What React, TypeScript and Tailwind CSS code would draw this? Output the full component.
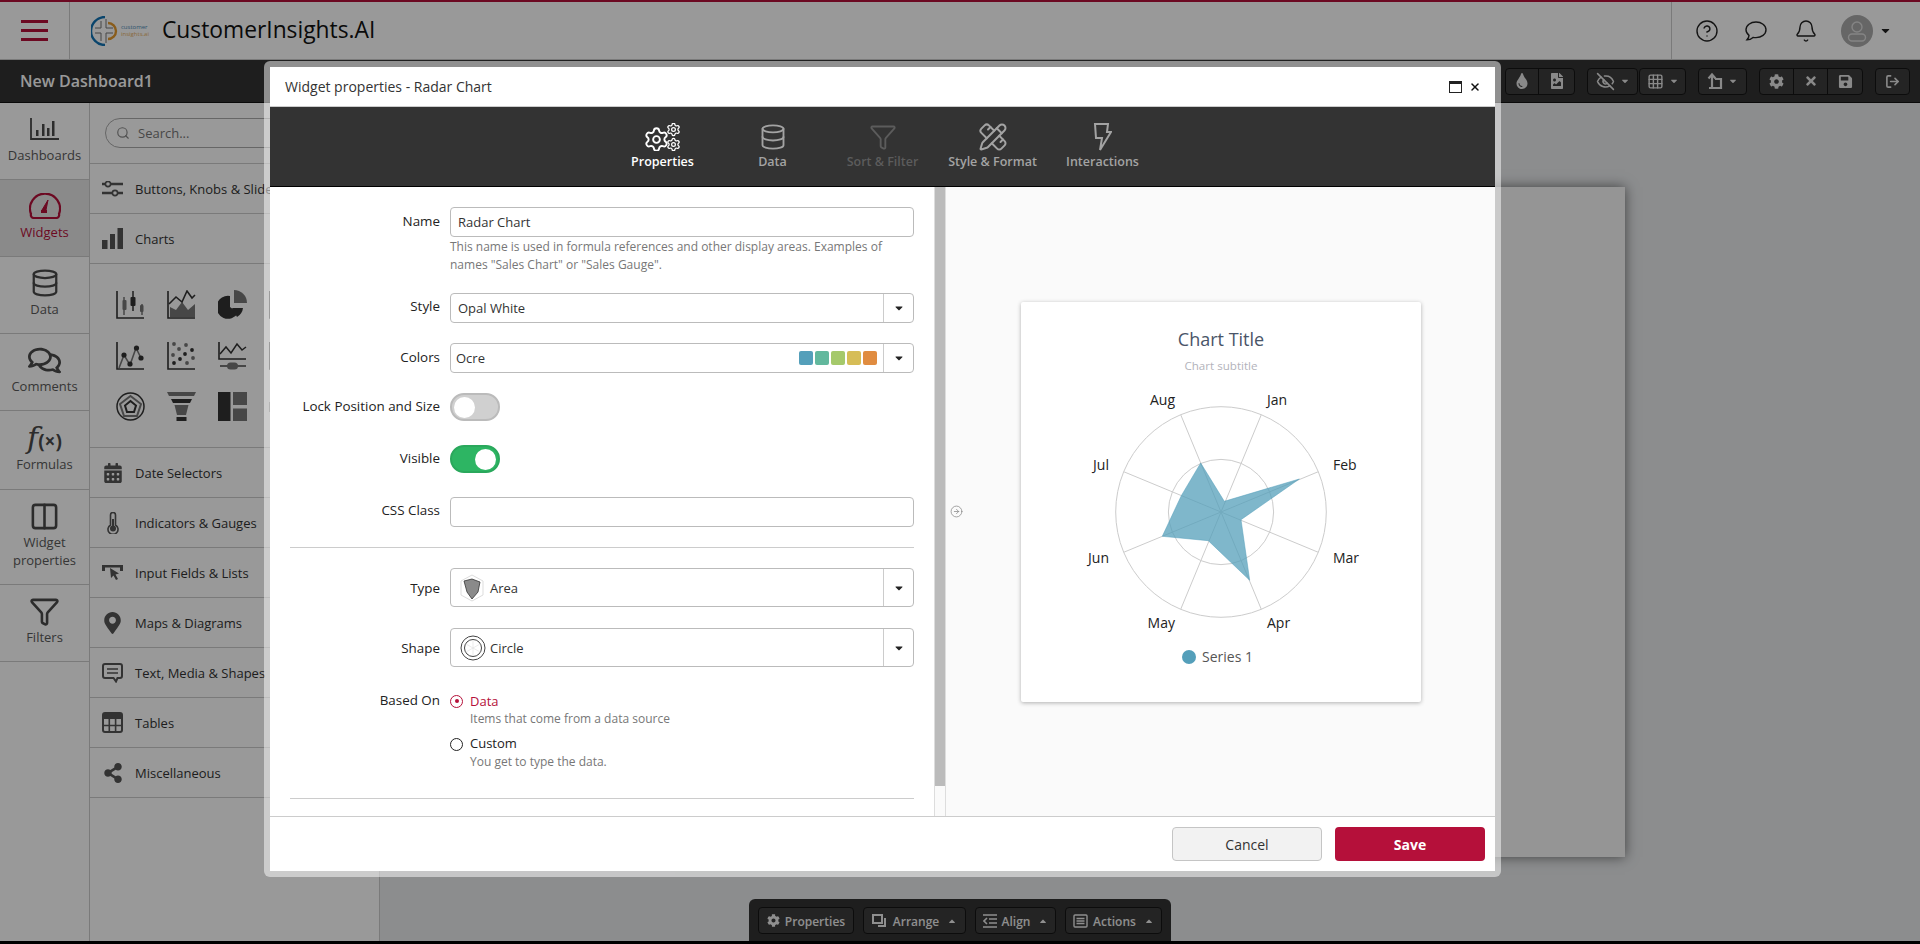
import type { ReactNode } from 'react';
import {
  CircleArrowRight,
  Columns2,
  Database,
  EyeOff,
  Funnel,
  Grid3x3,
  LogOut,
  PencilRuler,
  Search,
  Settings,
  Bell,
  CircleHelp,
  X,
} from 'lucide-react';
import {
  FaCalendarAlt,
  FaCaretDown,
  FaCaretUp,
  FaCog,
  FaFileImage,
  FaMapMarkerAlt,
  FaRegComments,
  FaSave,
  FaShareAlt,
  FaTimes,
  FaTint,
} from 'react-icons/fa';

const Axis = () => <path d="M1 1V28H28" fill="none" stroke="#333" strokeWidth="1.6" />;

// 4th column sits behind the dialog, only its left edge shows through the dialog border
const chartIcons: ReactNode[] = [
  <>
    <Axis />
    <path d="M8 7V25M26 14V25" stroke="#777" strokeWidth="1.5" />
    <rect x="6.5" y="10" width="4" height="10" fill="#777" rx="1" />
    <rect x="24" y="15" width="3.5" height="7" fill="#777" rx="1" />
    <path d="M17 1V21" stroke="#333" strokeWidth="1.5" />
    <rect x="14.5" y="7" width="5" height="9" fill="#333" rx="1" />
  </>,
  <>
    <Axis />
    <path d="M3 27V17L9 20L15 12L21 20L28 14V27Z" fill="#777" />
    <path d="M2 14L9 7L15 12L20 1L25 8L28 5" fill="none" stroke="#333" strokeWidth="1.6" />
  </>,
  <>
    <path d="M12 6V17L20 23A11.5 11.5 0 1 1 12 6Z" fill="#333" />
    <path d="M16 0A13 13 0 0 1 29 13H16Z" fill="#777" />
    <path d="M14 18H25A12 12 0 0 1 19 27Z" fill="#333" />
  </>,
  <Axis />,
  <>
    <Axis />
    <path d="M3 27L8 14L14 24L20 7L25 17" fill="none" stroke="#777" strokeWidth="1.6" />
    <circle cx="8" cy="14" r="2.6" fill="#333" />
    <circle cx="14" cy="23" r="2.6" fill="#333" />
    <circle cx="20.5" cy="7" r="2.6" fill="#333" />
    <circle cx="25" cy="17" r="2.6" fill="#333" />
  </>,
  <>
    <Axis />
    {[[7, 3], [12, 8], [19, 4], [6, 14], [26, 17], [20, 22]].map(([x, y]) => (
      <circle key={`${x}-${y}`} cx={x} cy={y} r="1.9" fill="#777" />
    ))}
    {[[25, 9], [18, 13], [13, 18], [7, 22]].map(([x, y]) => (
      <circle key={`${x}-${y}`} cx={x} cy={y} r="1.9" fill="#333" />
    ))}
  </>,
  <>
    <path d="M1 1V18H28" fill="none" stroke="#333" strokeWidth="1.6" />
    <path d="M2 13L8 6L13 12L19 3L24 9L28 6" fill="none" stroke="#333" strokeWidth="1.5" />
    <path d="M2 25H28" stroke="#777" strokeWidth="2" />
    <rect x="9" y="21.5" width="11" height="7" rx="3.5" fill="#777" />
  </>,
  <Axis />,
  <>
    <circle cx="14.5" cy="14.5" r="13.5" fill="none" stroke="#333" strokeWidth="1.5" />
    <path d="M14.5 4L25 12L21 24H8L4 12Z" fill="none" stroke="#777" strokeWidth="2" />
    <path d="M14.5 9L20 13.5L18 20H11L9 13.5Z" fill="none" stroke="#333" strokeWidth="2" />
  </>,
  <>
    <path d="M0 0H29L27 4H2Z" fill="#777" />
    <path d="M4 7H25L23 11H6Z" fill="#333" />
    <path d="M7.5 13H21.5L19 23H10Z" fill="#777" />
    <rect x="9.5" y="25" width="10" height="4" fill="#333" />
  </>,
  <>
    <rect x="0" y="0" width="12.5" height="29" fill="#333" />
    <rect x="15" y="0" width="14" height="13" fill="#777" />
    <rect x="15" y="16.5" width="14" height="12.5" fill="#777" />
  </>,
  <path d="M1 10V20" stroke="#999" strokeWidth="1.6" />,
];

const panelTop: [string, ReactNode][] = [
  [
    'Buttons, Knobs & Sliders',
    <svg width="21" height="16" viewBox="0 0 21 16" fill="none" stroke="#555">
      <path d="M0 3H21M0 12H21" strokeWidth="2.4" />
      <circle cx="6" cy="3" r="2.6" fill="#fff" strokeWidth="1.6" />
      <circle cx="13" cy="12" r="2.6" fill="#fff" strokeWidth="1.6" />
    </svg>,
  ],
  [
    'Charts',
    <svg width="21" height="21" viewBox="0 0 21 21" fill="#555">
      <rect x="0" y="12" width="5.5" height="9" />
      <rect x="8" y="6" width="5" height="15" />
      <rect x="15.5" y="0" width="5.5" height="21" />
    </svg>,
  ],
];

const panelBottom: [string, ReactNode][] = [
  ['Date Selectors', <FaCalendarAlt size={20} color="#555" />],
  [
    'Indicators & Gauges',
    <svg width="12" height="22" viewBox="0 0 12 22" fill="none" stroke="#555" strokeWidth="1.6">
      <path d="M3.5 13V3A2.5 2.5 0 0 1 8.5 3V13A5 5 0 1 1 3.5 13Z" />
      <circle cx="6" cy="16.5" r="3" fill="#555" stroke="none" />
      <path d="M6 7V16" strokeWidth="2" />
    </svg>,
  ],
  [
    'Input Fields & Lists',
    <svg width="21" height="17" viewBox="0 0 21 17" fill="#555">
      <path d="M0 1H21V7H18V3.5H3V7H0Z" />
      <path d="M8 4L17 9.5L13.5 10.5L16 15L14 16L11.5 11.5L9 14Z" />
    </svg>,
  ],
  ['Maps & Diagrams', <FaMapMarkerAlt size={22} color="#555" />],
  [
    'Text, Media & Shapes',
    <svg width="21" height="20" viewBox="0 0 21 20" fill="none" stroke="#555" strokeWidth="2">
      <path d="M3 1H18A2 2 0 0 1 20 3V13A2 2 0 0 1 18 15H15.5L14 18.5L11.5 15H3A2 2 0 0 1 1 13V3A2 2 0 0 1 3 1Z" />
      <path d="M5 6H16M5 10H16" strokeWidth="1.6" />
    </svg>,
  ],
  [
    'Tables',
    <svg width="21" height="21" viewBox="0 0 21 21" fill="none" stroke="#555">
      <rect x="1" y="1" width="19" height="19" rx="2" strokeWidth="2" />
      <rect x="1" y="1" width="19" height="6" fill="#555" strokeWidth="0" />
      <path d="M1 13.5H20M7.3 7V20M13.6 7V20" strokeWidth="1.6" />
    </svg>,
  ],
  ['Miscellaneous', <FaShareAlt size={20} color="#555" />],
];

function SideItem({ label, icon, h, active }: { label: ReactNode; icon: ReactNode; h: string; active?: boolean }) {
  return (
    <div
      className={`flex flex-col items-center justify-center border-b border-[#ccc] pb-[5px] text-[13px] leading-[18px] text-center ${h} ${
        active ? 'bg-[#e6e6e6] text-[#b5103a]' : 'text-[#5a5a5a]'
      }`}
    >
      <div className="h-[32px] flex items-center justify-center mb-[1px]">{icon}</div>
      <div>{label}</div>
    </div>
  );
}

function PanelRow({ label, icon }: { label: string; icon: ReactNode }) {
  return (
    <div className="h-[50px] flex items-center border-b border-[#ccc] whitespace-nowrap text-[13px] text-[#333]">
      <div className="w-[45px] pl-[12px] flex justify-start items-center">
        <div className="w-[21px] flex justify-center">{icon}</div>
      </div>
      <span className="pt-[2px]">{label}</span>
    </div>
  );
}

function ToolGroup({ children }: { children: ReactNode }) {
  return (
    <div className="h-[27px] flex rounded-[4px] border border-[#151515] bg-[#3c3c3c] divide-x divide-[#151515] text-[#e4e4e4]">
      {children}
    </div>
  );
}

function ToolCell({ w, children }: { w: string; children: ReactNode }) {
  return <div className={`${w} flex items-center justify-center gap-[5px]`}>{children}</div>;
}

function BottomButton({ w, icon, label, caret = true }: { w: string; icon: ReactNode; label: string; caret?: boolean }) {
  return (
    <div
      className={`${w} h-[27px] flex items-center justify-center gap-[5px] rounded-[4px] border border-[#151515] bg-[#3c3c3c] text-[12px] font-semibold text-[#eee]`}
    >
      {icon}
      <span className="pt-[2px]">{label}</span>
      {caret && <FaCaretUp size={10} className="ml-[3px]" />}
    </div>
  );
}

function FormRow({ label, labelClass, children, className }: { label: string; labelClass: string; children: ReactNode; className: string }) {
  return (
    <div className={`flex ${className}`}>
      <div className={`w-[170px] text-right text-[13.4px] leading-[18px] text-[#222] whitespace-nowrap ${labelClass}`}>{label}</div>
      <div className="ml-[10px] w-[464px]">{children}</div>
    </div>
  );
}

function SelectBox({ h, children }: { h: string; children: ReactNode }) {
  return (
    <div className={`${h} flex border border-[#bbb] rounded-[4px] bg-white text-[13px] text-[#333]`}>
      <div className="flex-1 flex items-center min-w-0">{children}</div>
      <div className="w-[30px] border-l border-[#ccc] flex items-center justify-center">
        <FaCaretDown size={12} color="#222" />
      </div>
    </div>
  );
}

function Toggle({ on }: { on?: boolean }) {
  return (
    <div
      className={`w-[50px] h-[28px] rounded-full border-2 flex items-center px-[2px] ${
        on ? 'bg-[#2db563] border-[#2aa85c] justify-end' : 'bg-[#d0d0d0] border-[#bbb] justify-start'
      }`}
    >
      <div className="w-[21px] h-[21px] rounded-full bg-white" />
    </div>
  );
}

function RadarChart() {
  const labels: [string, number, number, 'start' | 'end'][] = [
    ['Aug', 154, 103, 'end'],
    ['Jan', 246, 103, 'start'],
    ['Jul', 88, 168, 'end'],
    ['Feb', 312, 168, 'start'],
    ['Jun', 88, 261, 'end'],
    ['Mar', 312, 261, 'start'],
    ['May', 154, 326, 'end'],
    ['Apr', 246, 326, 'start'],
  ];
  const spokes = [
    [40.3, 97.3],
    [97.3, 40.3],
    [97.3, -40.3],
    [40.3, -97.3],
  ];
  return (
    <svg width="400" height="400" viewBox="0 0 400 400">
      <text x="200" y="44" textAnchor="middle" fontSize="18" fill="#4a5568">Chart Title</text>
      <text x="200" y="68" textAnchor="middle" fontSize="11.6" fill="#b3b3bb">Chart subtitle</text>
      <circle cx="200" cy="210" r="105.3" fill="none" stroke="#ccc" />
      <circle cx="200" cy="210" r="52.6" fill="none" stroke="#ccc" />
      {spokes.map(([dx, dy]) => (
        <line key={dx + dy} x1={200 - dx} y1={210 - dy} x2={200 + dx} y2={210 + dy} stroke="#ccc" />
      ))}
      <polygon
        points="203.3,199.3 278.3,177 220,217.7 228.7,278.3 187.3,238.7 141.3,234.3 160.3,193.7 179.7,161"
        fill="#549fba"
        fillOpacity="0.75"
        stroke="#549fba"
        strokeWidth="0.5"
      />
      {labels.map(([t, x, y, anchor]) => (
        <text key={t} x={x} y={y} textAnchor={anchor} fontSize="14" fill="#222">{t}</text>
      ))}
      <circle cx="168" cy="355" r="7" fill="#549fba" />
      <text x="181" y="360" fontSize="14" fill="#555">Series 1</text>
    </svg>
  );
}

function Tab({ label, icon, className }: { label: string; icon: ReactNode; className: string }) {
  return (
    <div className={`w-[110px] flex flex-col items-center ${className}`}>
      <div className="h-[28px] flex items-center justify-center">{icon}</div>
      <div className="mt-[2px] text-[12.5px] leading-[18px] font-semibold whitespace-nowrap">{label}</div>
    </div>
  );
}

export default function App() {
  return (
    <div className="relative w-[1920px] h-[944px] overflow-hidden bg-black font-['Open_Sans',sans-serif]">
      <div className="h-[941px] flex flex-col">
        {/* top header */}
        <header className="h-[60px] shrink-0 flex bg-white border-t-2 border-b border-t-[#b5103a] border-b-[#ccc]">
          <div className="w-[70px] border-r border-[#ccc] flex flex-col items-center justify-center gap-[6px] pr-[1px]">
            <div className="w-[27px] h-[3px] bg-[#b5103a]" />
            <div className="w-[27px] h-[3px] bg-[#b5103a]" />
            <div className="w-[27px] h-[3px] bg-[#b5103a]" />
          </div>
          <div className="ml-[21px] w-[60px] h-[30px] self-center flex items-center">
            <svg width="28" height="30" viewBox="0 0 28 30" fill="none">
              <path d="M14 1A14 14 0 0 0 14 29" stroke="#1273b5" strokeWidth="2.4" />
              <path d="M17 7A8 8 0 0 1 17 23" stroke="#e59a2e" strokeWidth="2.4" />
              <path d="M10 5V12H4M4 17H10V25M15 3V12H22M22 17H15V27" stroke="#777" strokeWidth="1" />
            </svg>
            <div className="ml-[2px] text-[6px] leading-[7px]">
              <div className="text-[#4a8cb8]">customer</div>
              <div className="text-[#e8b060]">insights.ai</div>
            </div>
          </div>
          <div className="ml-[11px] self-center text-[22.8px] text-[#111]">CustomerInsights.AI</div>
          <div className="ml-auto w-[249px] border-l border-[#ccc] flex items-center pl-[23px] text-[#222]">
            <CircleHelp size={24} strokeWidth={1.4} />
            <svg width="24" height="22" viewBox="0 0 24 22" fill="none" stroke="currentColor" strokeWidth="1.4" className="ml-[25px]">
              <path d="M12 2C6.5 2 2 5.3 2 9.8C2 12.2 3.2 14 5 15.4C5 17 4 18.6 3 19.8C5.5 19.8 7.5 18.8 9 17.4C10 17.6 11 17.6 12 17.6C17.5 17.6 22 14.3 22 9.8C22 5.3 17.5 2 12 2Z" />
            </svg>
            <Bell size={24} strokeWidth={1.4} className="ml-[26px]" />
            <div className="ml-[23px] w-[32px] h-[32px] rounded-full bg-[#aaa] flex items-center justify-center">
              <svg width="20" height="22" viewBox="0 0 20 22" fill="none" stroke="#ddd" strokeWidth="1.4">
                <circle cx="10" cy="7" r="5" />
                <rect x="1.5" y="14" width="17" height="7" rx="3.5" />
              </svg>
            </div>
            <FaCaretDown size={13} className="ml-[6px]" />
          </div>
        </header>

        {/* dashboard toolbar */}
        <div className="h-[43px] shrink-0 flex items-center bg-[#333] border-b border-[#111] pr-[10px]">
          <div className="ml-[20px] text-[16px] font-semibold text-white">New Dashboard1</div>
          <div className="ml-auto flex items-center gap-[12px]">
            <ToolGroup>
              <ToolCell w="w-[33px]"><FaTint size={16} /></ToolCell>
              <ToolCell w="w-[35px]"><FaFileImage size={16} /></ToolCell>
            </ToolGroup>
            <div className="flex gap-[1px]">
              <ToolGroup>
                <ToolCell w="w-[49px]"><EyeOff size={19} /><FaCaretDown size={10} /></ToolCell>
              </ToolGroup>
              <ToolGroup>
                <ToolCell w="w-[45px]"><Grid3x3 size={17} /><FaCaretDown size={10} /></ToolCell>
              </ToolGroup>
            </div>
            <ToolGroup>
              <ToolCell w="w-[47px]">
                <svg width="16" height="18" viewBox="0 0 16 18" fill="none" stroke="currentColor" strokeWidth="2.2">
                  <path d="M5 16V4M1.5 6.5L5 2.5L8.5 6.5" />
                  <path d="M8 7H14V16H2" />
                </svg>
                <FaCaretDown size={10} />
              </ToolCell>
            </ToolGroup>
            <ToolGroup>
              <ToolCell w="w-[34px]"><FaCog size={15} /></ToolCell>
              <ToolCell w="w-[34px]"><FaTimes size={14} /></ToolCell>
              <ToolCell w="w-[34px]"><FaSave size={15} /></ToolCell>
            </ToolGroup>
            <ToolGroup>
              <ToolCell w="w-[33px]"><LogOut size={15} strokeWidth={2.6} /></ToolCell>
            </ToolGroup>
          </div>
        </div>

        <div className="flex-1 flex min-h-0">
          {/* left nav */}
          <nav className="w-[90px] shrink-0 bg-white border-r border-[#ccc]">
            <SideItem
              h="h-[77px]"
              label="Dashboards"
              icon={
                <svg width="29" height="22" viewBox="0 0 29 22" fill="#4a4a4a">
                  <path d="M1 0V21H29" fill="none" stroke="#4a4a4a" strokeWidth="1.8" />
                  <rect x="6" y="12" width="2.5" height="6" />
                  <rect x="12" y="6" width="2.5" height="12" />
                  <rect x="17" y="10" width="2.5" height="8" />
                  <rect x="22" y="3" width="2.5" height="15" />
                </svg>
              }
            />
            <SideItem
              active
              h="h-[77px]"
              label="Widgets"
              icon={
                <svg width="32" height="26" viewBox="0 0 32 26" fill="none" stroke="#b5103a">
                  <path d="M5 25H27A3 3 0 0 0 30 21A15 15 0 1 0 2 21A3 3 0 0 0 5 25Z" strokeWidth="2.2" />
                  <path d="M19 7L17 17H13Z" fill="#b5103a" strokeWidth="1" />
                  <rect x="12" y="17" width="6" height="3" fill="#b5103a" stroke="none" />
                </svg>
              }
            />
            <SideItem h="h-[77px]" label="Data" icon={<Database size={30} color="#4a4a4a" strokeWidth={1.8} />} />
            <SideItem h="h-[77px]" label="Comments" icon={<FaRegComments size={33} color="#4a4a4a" />} />
            <SideItem
              h="h-[79px]"
              label="Formulas"
              icon={
                <span className="text-[30px] leading-none text-[#4a4a4a] font-['DejaVu_Serif',serif] italic">
                  f<span className="not-italic font-bold text-[19px] font-['Open_Sans',sans-serif]">(×)</span>
                </span>
              }
            />
            <SideItem
              h="h-[95px]"
              label={<>Widget<br />properties</>}
              icon={<Columns2 size={31} color="#4a4a4a" strokeWidth={2} />}
            />
            <SideItem h="h-[77px]" label="Filters" icon={<Funnel size={31} color="#4a4a4a" strokeWidth={2} />} />
          </nav>

          {/* widget panel */}
          <aside className="w-[290px] shrink-0 bg-white border-r border-[#ccc] overflow-hidden">
            <div className="h-[61px] border-b border-[#ccc] pl-[15px] pt-[15px]">
              <div className="w-[250px] h-[30px] rounded-full border border-[#aaa] flex items-center pl-[10px] text-[13px] text-[#777]">
                <Search size={14} color="#888" />
                <span className="ml-[8px] pt-[2px]">Search...</span>
              </div>
            </div>
            {panelTop.map(([label, icon]) => (
              <PanelRow key={label} label={label} icon={icon} />
            ))}
            <div className="h-[184px] border-b border-[#ccc] pl-[26px] pt-[26px] grid grid-cols-[repeat(4,29px)] auto-rows-[29px] gap-x-[22px] gap-y-[22px]">
              {chartIcons.map((icon, i) => (
                <svg key={i} width="29" height="29" viewBox="0 0 29 29">
                  {icon}
                </svg>
              ))}
            </div>
            {panelBottom.map(([label, icon]) => (
              <PanelRow key={label} label={label} icon={icon} />
            ))}
          </aside>

          {/* canvas */}
          <main className="relative flex-1 bg-[#e9ebed] pt-[84px] pl-[295px]">
            <div className="w-[950px] h-[670px] bg-[#f8f8f8] shadow-[0_0_12px_rgba(0,0,0,0.55)]" />
            <div className="absolute left-[369px] bottom-0 w-[422px] h-[42px] rounded-t-[6px] bg-[#333] flex items-start gap-[9px] pl-[9px] pt-[8px]">
              <BottomButton w="w-[96px]" caret={false} icon={<FaCog size={13} />} label="Properties" />
              <BottomButton
                w="w-[103px]"
                label="Arrange"
                icon={
                  <svg width="16" height="14" viewBox="0 0 16 14" fill="none" stroke="currentColor" strokeWidth="2">
                    <rect x="1" y="1" width="9" height="8" />
                    <path d="M13 4V12H6" />
                  </svg>
                }
              />
              <BottomButton
                w="w-[81px]"
                label="Align"
                icon={
                  <svg width="14" height="14" viewBox="0 0 14 14" fill="none" stroke="currentColor" strokeWidth="1.6">
                    <path d="M0 1H14M6 5H14M6 9H14M0 13H14M4 4L1 7L4 10" />
                  </svg>
                }
              />
              <BottomButton
                w="w-[97px]"
                label="Actions"
                icon={
                  <svg width="15" height="14" viewBox="0 0 15 14" fill="none" stroke="currentColor" strokeWidth="1.4">
                    <rect x="1" y="1" width="13" height="12" rx="1" />
                    <path d="M3.5 4.5H11.5M3.5 7H11.5M3.5 9.5H11.5" />
                  </svg>
                }
              />
            </div>
          </main>
        </div>
      </div>

      {/* modal backdrop */}
      <div className="absolute inset-0 bg-black/40" />

      {/* widget properties dialog */}
      <div className="absolute left-[264px] top-[61px] w-[1237px] h-[816px] rounded-[6px] border-[6px] border-white/50 bg-clip-padding bg-white flex flex-col">
        <div className="h-[40px] shrink-0 flex items-center border-b border-[#ccc] pl-[15px] pr-[14px] text-[14px] text-[#333]">
          Widget properties - Radar Chart
          <div className="ml-auto w-[13px] h-[12px] border border-[#222] border-t-[3px]" />
          <X size={12} color="#111" strokeWidth={3} className="ml-[7px]" />
        </div>

        <div className="h-[80px] shrink-0 bg-[#333] border-b border-black flex justify-center pt-[16px]">
          <Tab
            label="Properties"
            className="text-white"
            icon={
              <svg width="36" height="28" viewBox="0 0 36 28" fill="none" className="text-white">
                <Settings x="-2" y="3" width="27" height="27" strokeWidth={1.7} />
                <Settings x="21" y="-1" width="15" height="15" strokeWidth={2} />
                <Settings x="21" y="14" width="15" height="15" strokeWidth={2} />
              </svg>
            }
          />
          <Tab label="Data" className="text-[#a3a3a3]" icon={<Database size={28} strokeWidth={1.6} />} />
          <Tab label="Sort & Filter" className="text-[#5c5c5c]" icon={<Funnel size={28} strokeWidth={1.6} />} />
          <Tab label="Style & Format" className="text-[#a3a3a3]" icon={<PencilRuler size={30} strokeWidth={1.6} />} />
          <Tab
            label="Interactions"
            className="text-[#a3a3a3]"
            icon={
              <svg width="19" height="28" viewBox="0 0 19 28" fill="none" stroke="currentColor" strokeWidth="2">
                <path d="M2 1H15L14 9H18L7 27L9 15H3Z" />
              </svg>
            }
          />
        </div>

        <div className="flex-1 flex min-h-0">
          {/* form */}
          <div className="w-[664px] shrink-0 overflow-hidden pt-[20px]">
            <FormRow label="Name" labelClass="pt-[5px]" className="">
              <div className="h-[30px] border border-[#bbb] rounded-[4px] flex items-center pl-[7px] pt-[2px] text-[13px] text-[#333]">Radar Chart</div>
              <div className="mt-[1px] text-[12px] leading-[18px] text-[#777]">
                This name is used in formula references and other display areas. Examples of<br />
                names "Sales Chart" or "Sales Gauge".
              </div>
            </FormRow>
            <FormRow label="Style" labelClass="pt-[4px]" className="mt-[19px]">
              <SelectBox h="h-[30px]"><span className="pl-[7px] pt-[2px]">Opal White</span></SelectBox>
            </FormRow>
            <FormRow label="Colors" labelClass="pt-[5px]" className="mt-[20px]">
              <SelectBox h="h-[30px]">
                <span className="pl-[5px] pt-[2px]">Ocre</span>
                <div className="ml-auto mr-[6px] flex gap-[2px]">
                  <div className="w-[14px] h-[14px] rounded-[2px] bg-[#549fba]" />
                  <div className="w-[14px] h-[14px] rounded-[2px] bg-[#62b89d]" />
                  <div className="w-[14px] h-[14px] rounded-[2px] bg-[#a5c96b]" />
                  <div className="w-[14px] h-[14px] rounded-[2px] bg-[#d6bd57]" />
                  <div className="w-[14px] h-[14px] rounded-[2px] bg-[#e08c40]" />
                </div>
              </SelectBox>
            </FormRow>
            <FormRow label="Lock Position and Size" labelClass="pt-[4px]" className="mt-[20px]">
              <Toggle />
            </FormRow>
            <FormRow label="Visible" labelClass="pt-[4px]" className="mt-[24px]">
              <Toggle on />
            </FormRow>
            <FormRow label="CSS Class" labelClass="pt-[4px]" className="mt-[24px]">
              <div className="h-[30px] border border-[#bbb] rounded-[4px]" />
            </FormRow>
            <div className="mt-[20px] ml-[20px] w-[624px] border-t border-[#ccc]" />
            <FormRow label="Type" labelClass="pt-[11px]" className="mt-[20px]">
              <SelectBox h="h-[39px]">
                <svg width="24" height="28" viewBox="0 0 24 28" className="ml-[9px]" fill="none">
                  <path d="M12 1L23 7V21L12 27L1 21V7Z" stroke="#ddd" />
                  <path d="M4 7L12 5L20 8L18 18L12 25L7 18Z" fill="#8a8a8a" stroke="#333" strokeWidth="0.8" />
                </svg>
                <span className="ml-[6px] pt-[2px]">Area</span>
              </SelectBox>
            </FormRow>
            <FormRow label="Shape" labelClass="pt-[11px]" className="mt-[21px]">
              <SelectBox h="h-[39px]">
                <svg width="26" height="26" viewBox="0 0 26 26" className="ml-[9px]" fill="none" stroke="#444">
                  <circle cx="13" cy="13" r="12" />
                  <circle cx="13" cy="13" r="8.5" />
                  <path d="M13 5V21M6 9L20 17M20 9L6 17" stroke="#ddd" strokeWidth="0.6" />
                </svg>
                <span className="ml-[4px] pt-[2px]">Circle</span>
              </SelectBox>
            </FormRow>
            <FormRow label="Based On" labelClass="-mt-[1px]" className="mt-[25px]">
              <div className="flex items-center h-[18px] text-[13px] font-medium text-[#b5103a]">
                <div className="w-[13px] h-[13px] rounded-full border border-[#b5103a] flex items-center justify-center">
                  <div className="w-[4px] h-[4px] rounded-full bg-[#b5103a]" />
                </div>
                <span className="ml-[7px] pt-[2px]">Data</span>
              </div>
              <div className="ml-[20px] text-[12px] leading-[18px] text-[#777]">Items that come from a data source</div>
              <div className="mt-[7px] flex items-center h-[18px] text-[13px] font-medium text-[#222]">
                <div className="w-[13px] h-[13px] rounded-full border border-[#222]" />
                <span className="ml-[7px]">Custom</span>
              </div>
              <div className="ml-[20px] text-[12px] leading-[18px] text-[#777]">You get to type the data.</div>
            </FormRow>
            <div className="mt-[27px] ml-[20px] w-[624px] border-t border-[#ccc]" />
          </div>

          {/* scrollbar */}
          <div className="w-[12px] shrink-0 border-x border-[#ddd] bg-[#fafafa]">
            <div className="h-[599px] bg-[#bbb]" />
          </div>

          {/* preview */}
          <div className="relative flex-1 bg-[#fafafa] flex items-center justify-center pl-[1px] pt-[1px]">
            <CircleArrowRight size={13} color="#888" strokeWidth={1.4} className="absolute left-[4px] top-[318px]" />
            <div className="w-[400px] h-[400px] bg-white rounded-[2px] shadow-[0_1px_4px_rgba(0,0,0,0.3)]">
              <RadarChart />
            </div>
          </div>
        </div>

        <div className="h-[55px] shrink-0 border-t border-[#ccc] flex items-start justify-end gap-[13px] pr-[10px] pt-[10px] text-[14px]">
          <div className="w-[150px] h-[34px] rounded-[4px] border border-[#c5c5c5] bg-[#f2f2f2] text-[#333] flex items-center justify-center">Cancel</div>
          <div className="w-[150px] h-[34px] rounded-[4px] bg-[#b5103a] text-white font-bold flex items-center justify-center">Save</div>
        </div>
      </div>
    </div>
  );
}
